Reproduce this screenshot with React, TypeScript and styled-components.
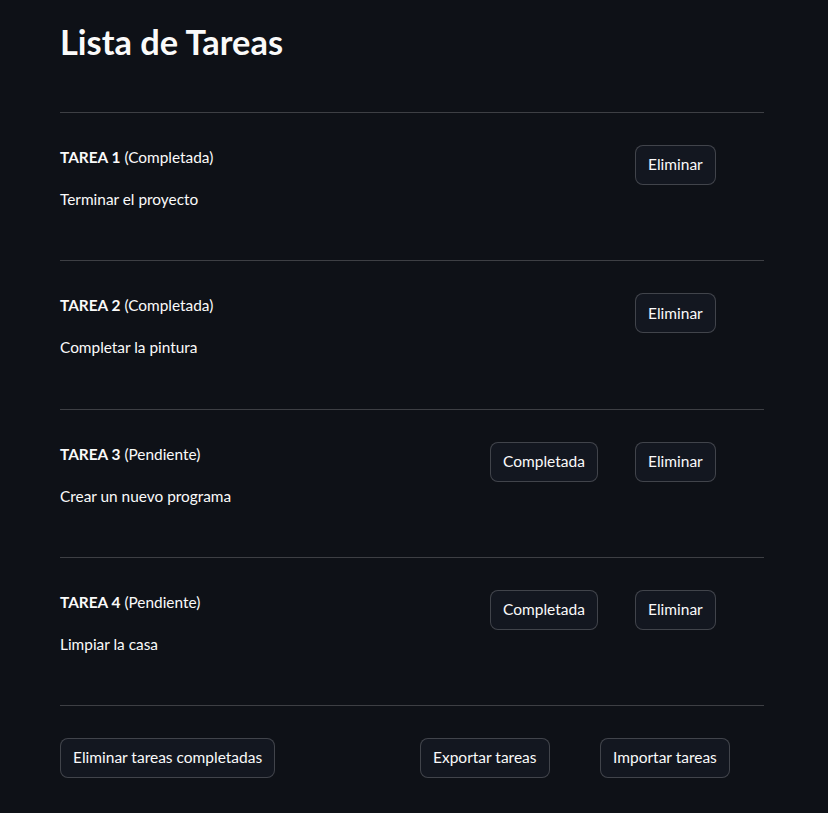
import React from "react";
import styled, { createGlobalStyle } from "styled-components";

const GlobalStyle = createGlobalStyle`
  html, body {
    margin: 0;
    padding: 0;
    background: #0e1117;
  }
  body {
    font-family: Lato, "Noto Sans", sans-serif;
    color: #fafafa;
  }
`;

const Page = styled.main`
  box-sizing: border-box;
  width: 828px;
  min-height: 813px;
  padding: 0 64px 0 60px;
  background: #0e1117;
  display: flex;
  flex-direction: column;
`;

const Title = styled.h1`
  box-sizing: border-box;
  margin: 0;
  padding: 21px 0 0 0;
  height: 112px;
  font-size: 34.4px;
  font-weight: 700;
  line-height: 1.2;
  color: #fafafa;
`;

const Divider = styled.hr`
  margin: 0;
  border: none;
  height: 1px;
  background: rgba(250, 250, 250, 0.2);
`;

const TaskRow = styled.section`
  display: grid;
  grid-template-columns: 414fr 129fr 129fr;
  column-gap: 16px;
  align-items: start;
  padding: 31px 0 48.25px;
`;

const TaskInfo = styled.div`
  display: flex;
  flex-direction: column;
  gap: 16px;
`;

const Line = styled.p`
  margin: 0;
  font-size: 15.4px;
  line-height: 26px;
`;

const Strong = styled.strong`
  font-weight: 700;
`;

const Cell = styled.div<{ $offset?: number }>`
  display: flex;
  align-items: flex-start;
  padding-top: ${(p) => p.$offset ?? 0}px;
`;

const Button = styled.button`
  box-sizing: border-box;
  height: 40px;
  padding: 0 12px;
  border-radius: 8px;
  border: 1px solid rgba(250, 250, 250, 0.2);
  background: #131720;
  color: #fafafa;
  font-family: inherit;
  font-size: 15.5px;
  line-height: 1;
  cursor: pointer;
  white-space: nowrap;
`;

const Footer = styled.section`
  display: grid;
  grid-template-columns: 344fr 164fr 164fr;
  column-gap: 16px;
  padding-top: 32px;
`;

type Task = { id: number; status: string; text: string; done: boolean };

const tasks: Task[] = [
  { id: 1, status: "Completada", text: "Terminar el proyecto", done: true },
  { id: 2, status: "Completada", text: "Completar la pintura", done: true },
  { id: 3, status: "Pendiente", text: "Crear un nuevo programa", done: false },
  { id: 4, status: "Pendiente", text: "Limpiar la casa", done: false },
];

export default function App() {
  return (
    <>
      <GlobalStyle />
      <Page>
        <Title>Lista de Tareas</Title>
        {tasks.map((t) => (
          <React.Fragment key={t.id}>
            <Divider />
            <TaskRow>
              <TaskInfo>
                <Line>
                  <Strong>TAREA {t.id}</Strong> ({t.status})
                </Line>
                <Line>{t.text}</Line>
              </TaskInfo>
              <Cell $offset={1}>{!t.done && <Button>Completada</Button>}</Cell>
              <Cell $offset={1}>
                <Button>Eliminar</Button>
              </Cell>
            </TaskRow>
          </React.Fragment>
        ))}
        <Divider />
        <Footer>
          <Cell>
            <Button>Eliminar tareas completadas</Button>
          </Cell>
          <Cell>
            <Button>Exportar tareas</Button>
          </Cell>
          <Cell>
            <Button>Importar tareas</Button>
          </Cell>
        </Footer>
      </Page>
    </>
  );
}
